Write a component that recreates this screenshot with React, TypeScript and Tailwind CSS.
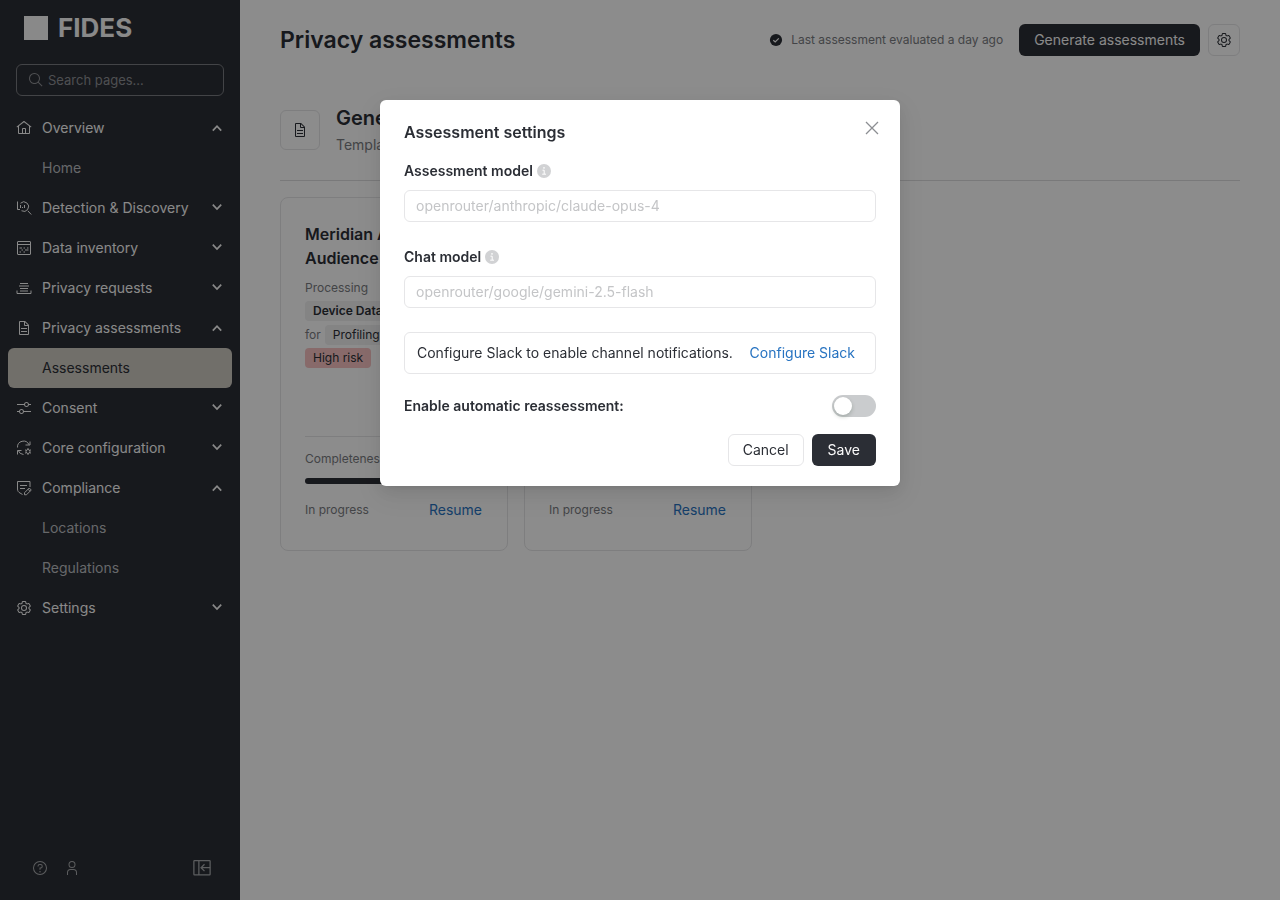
import { useId, useState, type ReactNode } from "react";

type IconProps = { className?: string; children?: ReactNode };

function Icon({ className = "size-4", children }: IconProps) {
  return (
    <svg viewBox="0 0 32 32" fill="currentColor" aria-hidden="true" className={`shrink-0 ${className}`}>
      {children}
    </svg>
  );
}

const HomeIcon = () => (
  <Icon>
    <path d="M16.6123,2.2138a1.01,1.01,0,0,0-1.2427,0L1,13.4194l1.2427,1.5717L4,13.6208V26a2.0041,2.0041,0,0,0,2,2H26a2.0037,2.0037,0,0,0,2-2V13.63L29.7573,15,31,13.4282ZM18,26H14V18h4Zm2,0V18a2.0023,2.0023,0,0,0-2-2H14a2.002,2.002,0,0,0-2,2v8H6V12.0615l10-7.79,10,7.8005V26Z" />
  </Icon>
);

const SearchIcon = () => (
  <Icon>
    <path d="M29,27.5859l-7.5521-7.5521a11.0177,11.0177,0,1,0-1.4141,1.4141L27.5859,29ZM4,13a9,9,0,1,1,9,9A9.01,9.01,0,0,1,4,13Z" />
  </Icon>
);

const DiscoveryIcon = () => (
  <Icon>
    <g fill="none" stroke="currentColor" strokeWidth="2">
      <path d="M9 6.5A9.500 9.500 0 1 1 11 21.500M23.500 21.500l7 7.500" />
      <path d="M3 3v16h5M9 10v6M13 14v2M17 10v6" />
    </g>
  </Icon>
);

const InventoryIcon = () => (
  <Icon>
    <g fill="none" stroke="currentColor" strokeWidth="2">
      <rect x="3" y="3" width="26" height="26" rx="1" />
      <path d="M3 9h26" />
      <path d="M7 16h5M15 16h3M22 16h3M11 20h3M18 20h7M7 24h3M15 24h3" />
    </g>
  </Icon>
);

const RequestsIcon = () => (
  <Icon>
    <g fill="none" stroke="currentColor" strokeWidth="2">
      <path d="M8 7h16M6 12h20M8 17h16M8 22h16M2 21v6h28v-6" />
    </g>
  </Icon>
);

const DocumentIcon = () => (
  <Icon>
    <path d="M25.7,9.3l-7-7A.9.9,0,0,0,18,2H8A2.006,2.006,0,0,0,6,4V28a2.006,2.006,0,0,0,2,2H24a2.006,2.006,0,0,0,2-2V10A.9.9,0,0,0,25.7,9.3ZM18,4.4,23.6,10H18ZM24,28H8V4h8v6a2.006,2.006,0,0,0,2,2h6Z" />
    <path d="M10 22h12v2H10zM10 16h12v2H10z" />
  </Icon>
);

const AdjustIcon = () => (
  <Icon>
    <path d="M30,8h-4.1c-0.5-2.3-2.5-4-4.9-4s-4.4,1.7-4.9,4H2v2h14.1c0.5,2.3,2.5,4,4.9,4s4.4-1.7,4.9-4H30V8z M21,12c-1.7,0-3-1.3-3-3s1.3-3,3-3s3,1.3,3,3S22.7,12,21,12z M2,24h4.1c0.5,2.3,2.5,4,4.9,4s4.4-1.7,4.9-4H30v-2H15.9c-0.5-2.3-2.5-4-4.9-4s-4.4,1.7-4.9,4H2V24z M11,20c1.7,0,3,1.3,3,3s-1.3,3-3,3s-3-1.3-3-3S9.3,20,11,20z" />
  </Icon>
);

const CoreIcon = () => (
  <Icon>
    <g fill="none" stroke="currentColor" strokeWidth="2">
      <path d="M3 15A12 12 0 0 1 26 9.500M19 10h9V3M15 29A12 12 0 0 1 4.500 21M11 21H3v8" />
      <circle cx="24" cy="23" r="4" />
      <path d="M24 16v3M24 27v3M18 19.500l3 1.800M27 24.700l3 1.800M18 26.500l3-1.800M27 21.300l3-1.800" />
    </g>
  </Icon>
);

const ComplianceIcon = () => (
  <Icon>
    <g fill="none" stroke="currentColor" strokeWidth="2">
      <path d="M28 14V3H3v15c0 4 2 6.500 5 8l5 3" />
      <path d="M8 11h14M8 17h10" />
      <path d="M17 25.500L26.500 16l4 4L21 29.500h-4zM24 18.500l4 4" />
    </g>
  </Icon>
);

const SettingsIcon = () => (
  <Icon>
    <path d="M27,16.76c0-.25,0-.5,0-.76s0-.51,0-.77l1.92-1.68A2,2,0,0,0,29.3,11L26.94,7a2,2,0,0,0-1.73-1,2,2,0,0,0-.64.1l-2.43.82a11.35,11.35,0,0,0-1.31-.75l-.51-2.52a2,2,0,0,0-2-1.61H13.64a2,2,0,0,0-2,1.61l-.51,2.52a11.48,11.48,0,0,0-1.32.75L7.43,6.06A2,2,0,0,0,6.79,6,2,2,0,0,0,5.06,7L2.7,11a2,2,0,0,0,.41,2.51L5,15.24c0,.25,0,.5,0,.76s0,.51,0,.77L3.11,18.45A2,2,0,0,0,2.7,21L5.06,25a2,2,0,0,0,1.73,1,2,2,0,0,0,.64-.1l2.43-.82a11.35,11.35,0,0,0,1.31.75l.51,2.52a2,2,0,0,0,2,1.61h4.72a2,2,0,0,0,2-1.61l.51-2.52a11.48,11.48,0,0,0,1.32-.75l2.42.82a2,2,0,0,0,.64.1,2,2,0,0,0,1.73-1L29.3,21a2,2,0,0,0-.41-2.51ZM25.21,24l-3.43-1.16a8.86,8.86,0,0,1-2.71,1.57L18.36,28H13.64l-.71-3.55a9.36,9.36,0,0,1-2.7-1.57L6.79,24,4.43,20l2.72-2.4a8.9,8.9,0,0,1,0-3.13L4.43,12,6.79,8l3.43,1.16a8.86,8.86,0,0,1,2.71-1.57L13.64,4h4.72l.71,3.55a9.36,9.36,0,0,1,2.7,1.57L25.21,8,27.57,12l-2.72,2.4a8.9,8.9,0,0,1,0,3.13L27.57,20Z" />
    <path d="M16,22a6,6,0,1,1,6-6A5.94,5.94,0,0,1,16,22Zm0-10a3.91,3.91,0,0,0-4,4,3.91,3.91,0,0,0,4,4,3.91,3.91,0,0,0,4-4A3.91,3.91,0,0,0,16,12Z" />
  </Icon>
);

const HelpIcon = () => (
  <Icon>
    <path d="M16,2A14,14,0,1,0,30,16,14,14,0,0,0,16,2Zm0,26A12,12,0,1,1,28,16,12,12,0,0,1,16,28Z" />
    <circle cx="16" cy="23.5" r="1.5" />
    <path d="M17,8H15.5A4.49,4.49,0,0,0,11,12.5V13h2v-.5A2.5,2.5,0,0,1,15.5,10H17a2.5,2.5,0,0,1,0,5H15v4.5h2V17a4.5,4.5,0,0,0,0-9Z" />
  </Icon>
);

const UserIcon = () => (
  <Icon>
    <path d="M16,4a5,5,0,1,1-5,5,5,5,0,0,1,5-5m0-2a7,7,0,1,0,7,7A7,7,0,0,0,16,2Z" />
    <path d="M26,30H24V25a5,5,0,0,0-5-5H13a5,5,0,0,0-5,5v5H6V25a7,7,0,0,1,7-7h6a7,7,0,0,1,7,7Z" />
  </Icon>
);

const PanelCloseIcon = () => (
  <Icon className="size-5">
    <g fill="none" stroke="currentColor" strokeWidth="2">
      <rect x="3" y="4" width="26" height="23" rx="1" />
      <path d="M11 4v23M29 15.500H16M20 10l-5.500 5.500L20 21" />
    </g>
  </Icon>
);

const Chevron = ({ up }: { up?: boolean }) => (
  <svg viewBox="0 0 10 10" aria-hidden="true" className="size-[10px] shrink-0" fill="none" stroke="currentColor" strokeWidth="1.7">
    <path d={up ? "M0.800 7.600L5 3.200L9.200 7.600" : "M0.800 1.600L5 6L9.200 1.600"} />
  </svg>
);

const CheckFilled = () => (
  <svg viewBox="0 0 14 14" aria-hidden="true" className="size-[14px] shrink-0">
    <circle cx="7" cy="7" r="6.100" fill="#2b2e35" />
    <path d="M4.300 7.200L6.200 9L9.800 5.300" fill="none" stroke="#fff" strokeWidth="1.200" />
  </svg>
);

const InfoFilled = () => (
  <svg viewBox="0 0 14 14" aria-hidden="true" className="size-[14px] shrink-0">
    <circle cx="7" cy="7" r="7" fill="#d1d2d4" />
    <circle cx="7" cy="3.900" r="0.800" fill="#fff" />
    <path d="M5.500 6.200H7.200V10M5.200 10.200H9" fill="none" stroke="#fff" strokeWidth="1" />
  </svg>
);

type Group = { label: string; icon: ReactNode; open?: boolean; children?: string[] };

const groups: Group[] = [
  { label: "Overview", icon: <HomeIcon />, open: true, children: ["Home"] },
  { label: "Detection & Discovery", icon: <DiscoveryIcon /> },
  { label: "Data inventory", icon: <InventoryIcon /> },
  { label: "Privacy requests", icon: <RequestsIcon /> },
  { label: "Privacy assessments", icon: <DocumentIcon />, open: true, children: ["Assessments"] },
  { label: "Consent", icon: <AdjustIcon /> },
  { label: "Core configuration", icon: <CoreIcon /> },
  { label: "Compliance", icon: <ComplianceIcon />, open: true, children: ["Locations", "Regulations"] },
  { label: "Settings", icon: <SettingsIcon /> },
];

function Sidebar() {
  return (
    <aside className="flex w-60 shrink-0 flex-col bg-[#2b2e35] text-[#fafafa]">
      <div className="flex h-14 items-center gap-[10px] px-6">
        <span className="size-6 bg-[#fafafa]" />
        <span className="text-[26px] leading-8 font-bold">FIDES</span>
      </div>
      <div className="px-4 pt-2">
        <label className="flex h-8 items-center gap-1 rounded-md border border-[#7a7c81] px-[11px] text-[#8f9196]">
          <SearchIcon />
          <input
            type="search"
            aria-label="Search pages"
            placeholder="Search pages..."
            className="w-full min-w-0 bg-transparent pt-[2px] text-[13px] outline-none placeholder:text-[#8f9196]"
          />
        </label>
      </div>
      <nav className="mt-3 flex flex-col text-sm">
        {groups.map((group) => (
          <div key={group.label}>
            <button type="button" aria-expanded={!!group.open} className="flex h-10 w-full items-center gap-[10px] pr-[18px] pl-4 text-left">
              {group.icon}
              <span className="flex-1">{group.label}</span>
              <Chevron up={group.open} />
            </button>
            {group.children?.map((child) => (
              <a
                key={child}
                href="#"
                className={
                  child === "Assessments"
                    ? "mx-2 flex h-10 items-center rounded-md bg-[#cecac2] pl-[34px] text-[#2b2e35]"
                    : "mx-2 flex h-10 items-center rounded-md pl-[34px] text-[#bcbec1]"
                }
              >
                {child}
              </a>
            ))}
          </div>
        ))}
      </nav>
      <div className="mt-auto flex items-center gap-4 px-7 pb-[22px] pl-8 text-[#a8aaad]">
        <button type="button" aria-label="Help"><HelpIcon /></button>
        <button type="button" aria-label="Account"><UserIcon /></button>
        <button type="button" aria-label="Collapse menu" className="ml-auto"><PanelCloseIcon /></button>
      </div>
    </aside>
  );
}

type Card = { title: string; data: string; use: string; progress: number };

const cards: Card[] = [
  { title: "Meridian Analytics Audience", data: "Device Data", use: "Profiling", progress: 60 },
  { title: "Meridian Analytics Audience", data: "Device Data", use: "Profiling", progress: 60 },
];

function AssessmentCard({ title, data, use, progress }: Card) {
  return (
    <article className="flex h-[354px] flex-col rounded-lg border border-[#e6e6e8] p-6 text-xs text-[#7a7c81]">
      <h3 className="text-base font-semibold text-[#2b2e35]">{title}</h3>
      <p className="mt-2 leading-5">Processing</p>
      <div className="mt-[3px] flex">
        <span className="rounded bg-[#f0f0f1] px-2 leading-5 font-semibold text-[#2b2e35]">{data}</span>
      </div>
      <div className="mt-1 flex gap-1">
        <span className="leading-5">for</span>
        <span className="rounded bg-[#f0f0f1] px-2 leading-5 text-[#2b2e35]">{use}</span>
      </div>
      <div className="mt-[3px] flex">
        <span className="rounded bg-[#f7c2c2] px-2 leading-5 text-[#2b2e35]">High risk</span>
      </div>
      <div className="mt-auto border-t border-[#e6e6e8] pt-[13px]">
        <p className="leading-[18px]">Completeness</p>
        <div className="mt-[10px] h-[6px] rounded-full bg-[#f0f0f1]">
          <div className="h-full rounded-full bg-[#2b2e35]" style={{ width: `${progress}%` }} />
        </div>
        <div className="mt-[15px] mb-[5px] flex items-center justify-between pr-[1px]">
          <span>In progress</span>
          <a href="#" className="text-sm leading-[22px] text-[#2773c1]">Resume</a>
        </div>
      </div>
    </article>
  );
}

function Field({ label, placeholder }: { label: string; placeholder: string }) {
  const id = useId();
  return (
    <div className="mb-6">
      <div className="mb-2 flex items-center gap-1">
        <label htmlFor={id} className="text-sm leading-[22px] font-semibold">{label}</label>
        <InfoFilled />
      </div>
      <input
        id={id}
        type="text"
        placeholder={placeholder}
        className="block h-8 w-full rounded-md border border-[#e6e6e8] px-[11px] pb-[2px] text-sm outline-none placeholder:text-[#c4c5c7]"
      />
    </div>
  );
}

function SettingsDialog() {
  const [enabled, setEnabled] = useState(false);
  return (
    <div className="fixed inset-0 flex items-start justify-center bg-black/45 pt-[100px]">
      <div
        role="dialog"
        aria-modal="true"
        aria-label="Assessment settings"
        className="w-[520px] rounded-md bg-white px-6 py-5 text-sm text-[#2b2e35] shadow-[0_6px_16px_0_rgba(0,0,0,0.08),0_3px_6px_-4px_rgba(0,0,0,0.12),0_9px_28px_8px_rgba(0,0,0,0.05)]"
      >
        <header className="mb-4 flex items-start justify-between">
          <h2 className="text-base font-semibold">Assessment settings</h2>
          <button type="button" aria-label="Close" className="-mr-1 text-[#8c8e92]">
            <svg viewBox="0 0 16 16" aria-hidden="true" className="size-4" fill="none" stroke="currentColor" strokeWidth="1.300">
              <path d="M2 2L14 14M14 2L2 14" />
            </svg>
          </button>
        </header>
        <Field label="Assessment model" placeholder="openrouter/anthropic/claude-opus-4" />
        <Field label="Chat model" placeholder="openrouter/google/gemini-2.5-flash" />
        <div className="flex items-center justify-between rounded-md border border-[#e6e6e8] py-[9px] pr-5 pl-3 leading-[22px]">
          <span>Configure Slack to enable channel notifications.</span>
          <a href="#" className="text-[#2773c1]">Configure Slack</a>
        </div>
        <div className="mt-[21px] flex items-center justify-between">
          <label htmlFor="reassess" className="leading-[22px] font-semibold">Enable automatic reassessment:</label>
          <span className="relative h-[22px] w-11">
            <input
              id="reassess"
              type="checkbox"
              role="switch"
              checked={enabled}
              onChange={(e) => setEnabled(e.target.checked)}
              className="peer block h-[22px] w-11 appearance-none rounded-full bg-[#caccce] checked:bg-[#2b2e35]"
            />
            <span className="pointer-events-none absolute top-[2px] left-[2px] size-[18px] rounded-full bg-white shadow-[0_2px_4px_rgba(0,35,11,0.2)] peer-checked:left-6" />
          </span>
        </div>
        <footer className="mt-[17px] flex justify-end gap-2">
          <button type="button" className="h-8 rounded-md border border-[#e6e6e8] px-[14px]">Cancel</button>
          <button type="button" className="h-8 rounded-md bg-[#2b2e35] px-4 text-[#fafafa]">Save</button>
        </footer>
      </div>
    </div>
  );
}

export default function App() {
  return (
    <div className="flex min-h-screen bg-white font-[Inter,'Liberation_Sans',sans-serif] text-[#2b2e35]">
      <Sidebar />
      <main className="flex-1 px-10 pt-6">
        <header className="flex items-start justify-between">
          <h1 className="text-[23px] leading-8 font-semibold">Privacy assessments</h1>
          <div className="flex items-center">
            <CheckFilled />
            <span className="mr-4 ml-2 text-xs text-[#7a7c81]">Last assessment evaluated a day ago</span>
            <button type="button" className="mr-2 h-8 rounded-md bg-[#2b2e35] px-[15px] text-sm text-[#fafafa]">Generate assessments</button>
            <button type="button" aria-label="Assessment settings" className="flex size-8 items-center justify-center rounded-md border border-[#e6e6e8]">
              <SettingsIcon />
            </button>
          </div>
        </header>
        <section className="mt-12">
          <div className="flex items-center gap-4 border-b border-[#dcdcde] pb-6">
            <span className="flex size-10 items-center justify-center rounded-md border border-[#e6e6e8]">
              <DocumentIcon />
            </span>
            <div>
              <h2 className="text-xl leading-7 font-semibold">General</h2>
              <p className="mt-[2px] text-sm leading-[22px] text-[#7a7c81]">Template</p>
            </div>
          </div>
          <div className="mt-4 grid grid-cols-4 gap-4">
            {cards.map((card, index) => (
              <AssessmentCard key={index} {...card} />
            ))}
          </div>
        </section>
      </main>
      <SettingsDialog />
    </div>
  );
}
